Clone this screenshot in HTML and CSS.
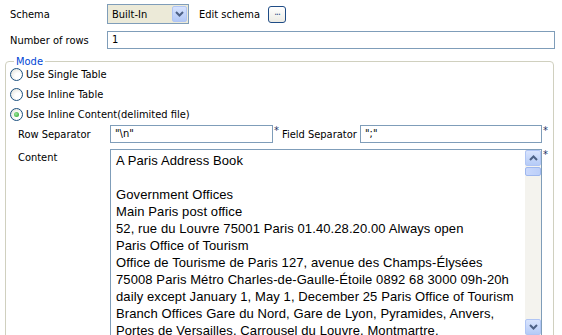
FILE: index.html
```html
<!DOCTYPE html>
<html lang="en">
<head>
    <meta charset="UTF-8">
    <title>Inline Content</title>
    <link rel="stylesheet" href="styles.css">
</head>
<body>
    <div class="page">
        <!-- Schema -->
        <div class="row schema-row">
            <span class="label">Schema</span>
            <div class="combo">
                <span class="combo-text">Built-In</span>
                <span class="combo-btn">
                    <svg width="9" height="6" viewBox="0 0 9 6"><path d="M1 1 L4.5 4.5 L8 1" fill="none" stroke="#4d6185" stroke-width="2"/></svg>
                </span>
            </div>
            <span class="edit-label">Edit schema</span>
            <button class="dots-btn" type="button">...</button>
        </div>

        <!-- Number of rows -->
        <div class="row rows-row">
            <span class="label">Number of rows</span>
            <div class="text-field wide">1</div>
        </div>

        <!-- Mode group -->
        <fieldset class="group">
            <legend>Mode</legend>
            <div class="radios">
                <div class="radio-row"><span class="radio"></span>Use Single Table</div>
                <div class="radio-row"><span class="radio"></span>Use Inline Table</div>
                <div class="radio-row"><span class="radio checked"></span>Use Inline Content(delimited file)</div>
            </div>

            <div class="sep-row">
                <span class="label inner">Row Separator</span>
                <div class="text-field row-sep">"\n"</div>
                <span class="star">*</span>
                <span class="field-label">Field Separator</span>
                <div class="text-field field-sep">";"</div>
                <span class="star">*</span>
            </div>

            <div class="content-row">
                <span class="label inner">Content</span>
                <div class="content-box">
                    <div class="content-text">A Paris Address Book<br><br>Government Offices<br>Main Paris post office<br>52, rue du Louvre 75001 Paris 01.40.28.20.00 Always open<br>Paris Office of Tourism<br>Office de Tourisme de Paris 127, avenue des Champs-Élysées<br>75008 Paris Métro Charles-de-Gaulle-Étoile 0892 68 3000 09h-20h<br>daily except January 1, May 1, December 25 Paris Office of Tourism<br>Branch Offices Gare du Nord, Gare de Lyon, Pyramides, Anvers,<br>Portes de Versailles, Carrousel du Louvre, Montmartre.</div>
                    <div class="scrollbar">
                        <span class="sb-btn">
                            <svg width="9" height="6" viewBox="0 0 9 6"><path d="M1 5 L4.5 1.5 L8 5" fill="none" stroke="#4d6185" stroke-width="2"/></svg>
                        </span>
                        <span class="sb-thumb"></span>
                        <span class="sb-track"></span>
                        <span class="sb-btn">
                            <svg width="9" height="6" viewBox="0 0 9 6"><path d="M1 1 L4.5 4.5 L8 1" fill="none" stroke="#4d6185" stroke-width="2"/></svg>
                        </span>
                    </div>
                </div>
                <span class="star">*</span>
            </div>
        </fieldset>
    </div>
</body>
</html>
```

FILE: styles.css
```css
/* General Page Styling */
html, body {
    margin: 0;
    height: 100%;
    overflow: hidden;
    background: #ffffff;
    color: #000;
    font-family: 'DejaVu Sans Condensed', 'Liberation Sans', sans-serif;
    font-size: 11px;
}

.page {
    padding: 4px 7px 0 0;
}

.row {
    display: flex;
    align-items: center;
}

.label {
    width: 97px;
    padding-left: 10px;
    flex-shrink: 0;
}

    .label.inner {
        width: 92px;
        padding-left: 6px;
    }

/* Schema row */
.schema-row {
    height: 20px;
}

.combo {
    width: 80px;
    height: 18px;
    border: 1px solid #7f9db9;
    background-color: #ecead8;
    display: flex;
    align-items: center;
}

.combo-text {
    flex-grow: 1;
    padding-left: 4px;
}

.combo-btn {
    width: 15px;
    height: 16px;
    margin-right: 1px;
    border: 1px solid #b0c5f4;
    border-radius: 2px;
    background: linear-gradient(#d6e2fd, #b2c8f6);
    display: flex;
    align-items: center;
    justify-content: center;
    box-sizing: border-box;
}

.edit-label {
    margin-left: 10px;
}

.dots-btn {
    margin-left: 8px;
    width: 18px;
    height: 17px;
    padding: 0 0 4px;
    border: 1px solid #1f4c86;
    border-radius: 3px;
    background: linear-gradient(#ffffff, #ecebe4);
    color: #1f4c86;
    font-family: inherit;
    font-size: 10px;
    line-height: 10px;
    letter-spacing: -1px;
}

/* Text fields */
.text-field {
    height: 16px;
    border: 1px solid #7f9db9;
    background: #fff;
    padding-left: 4px;
    line-height: 16px;
    box-sizing: content-box;
}

.rows-row {
    margin-top: 7px;
}

    .text-field.wide {
        flex-grow: 1;
    }

/* Mode group */
.group {
    margin: 6px 1px 0 5px;
    padding: 0 0 0 6px;
    border: 1px solid #d0d0bf;
    border-radius: 4px;
    height: 400px;
}

    .group legend {
        margin-left: 2px;
        padding: 0 2px;
        color: #0046d5;
        line-height: 13px;
    }

.radios {
    margin: -4px 0 0 -2px;
}

.radio-row {
    height: 20px;
    display: flex;
    align-items: center;
}

.radio {
    width: 11px;
    height: 11px;
    margin-right: 3px;
    border: 1px solid #1c5180;
    border-radius: 50%;
    background: radial-gradient(circle at 65% 65%, #ffffff 30%, #dcdcd2 100%);
    position: relative;
}

    .radio.checked::after {
        content: "";
        position: absolute;
        left: 3px;
        top: 3px;
        width: 5px;
        height: 5px;
        border-radius: 50%;
        background: radial-gradient(circle at 40% 40%, #9ee69e, #21a121);
    }

/* Separators */
.sep-row {
    display: flex;
    align-items: center;
    height: 18px;
    margin-top: 1px;
}

.row-sep {
    width: 157px;
}

.field-sep {
    width: 176px;
}

.field-label {
    width: 78px;
}

.star {
    width: 8px;
    padding-left: 1px;
    color: #1a3466;
    align-self: flex-start;
    line-height: 12px;
}

/* Content area */
.content-row {
    display: flex;
    margin-top: 6px;
}

    .content-row .label {
        padding-top: 2px;
    }

.content-box {
    width: 430px;
    height: 190px;
    border: 1px solid #7f9db9;
    display: flex;
}

.content-text {
    flex-grow: 1;
    padding: 2px 0 0 5px;
    font-family: 'Liberation Sans', Arial, sans-serif;
    font-size: 13px;
    letter-spacing: 0.1px;
    line-height: 17px;
    white-space: nowrap;
    overflow: hidden;
}

.scrollbar {
    width: 16px;
    background: #f4f3ee;
    display: flex;
    flex-direction: column;
    height: 185px;
}

.sb-btn {
    height: 16px;
    border: 1px solid #b0c5f4;
    border-radius: 2px;
    background: linear-gradient(#d9e4fd, #b5cbf7);
    display: flex;
    align-items: center;
    justify-content: center;
    box-sizing: border-box;
}

.sb-thumb {
    height: 7px;
    margin-top: 1px;
    border: 1px solid #9eb7ee;
    border-radius: 2px;
    background: linear-gradient(to right, #c9d8fc, #bccff9);
}

.sb-track {
    flex-grow: 1;
}
```
